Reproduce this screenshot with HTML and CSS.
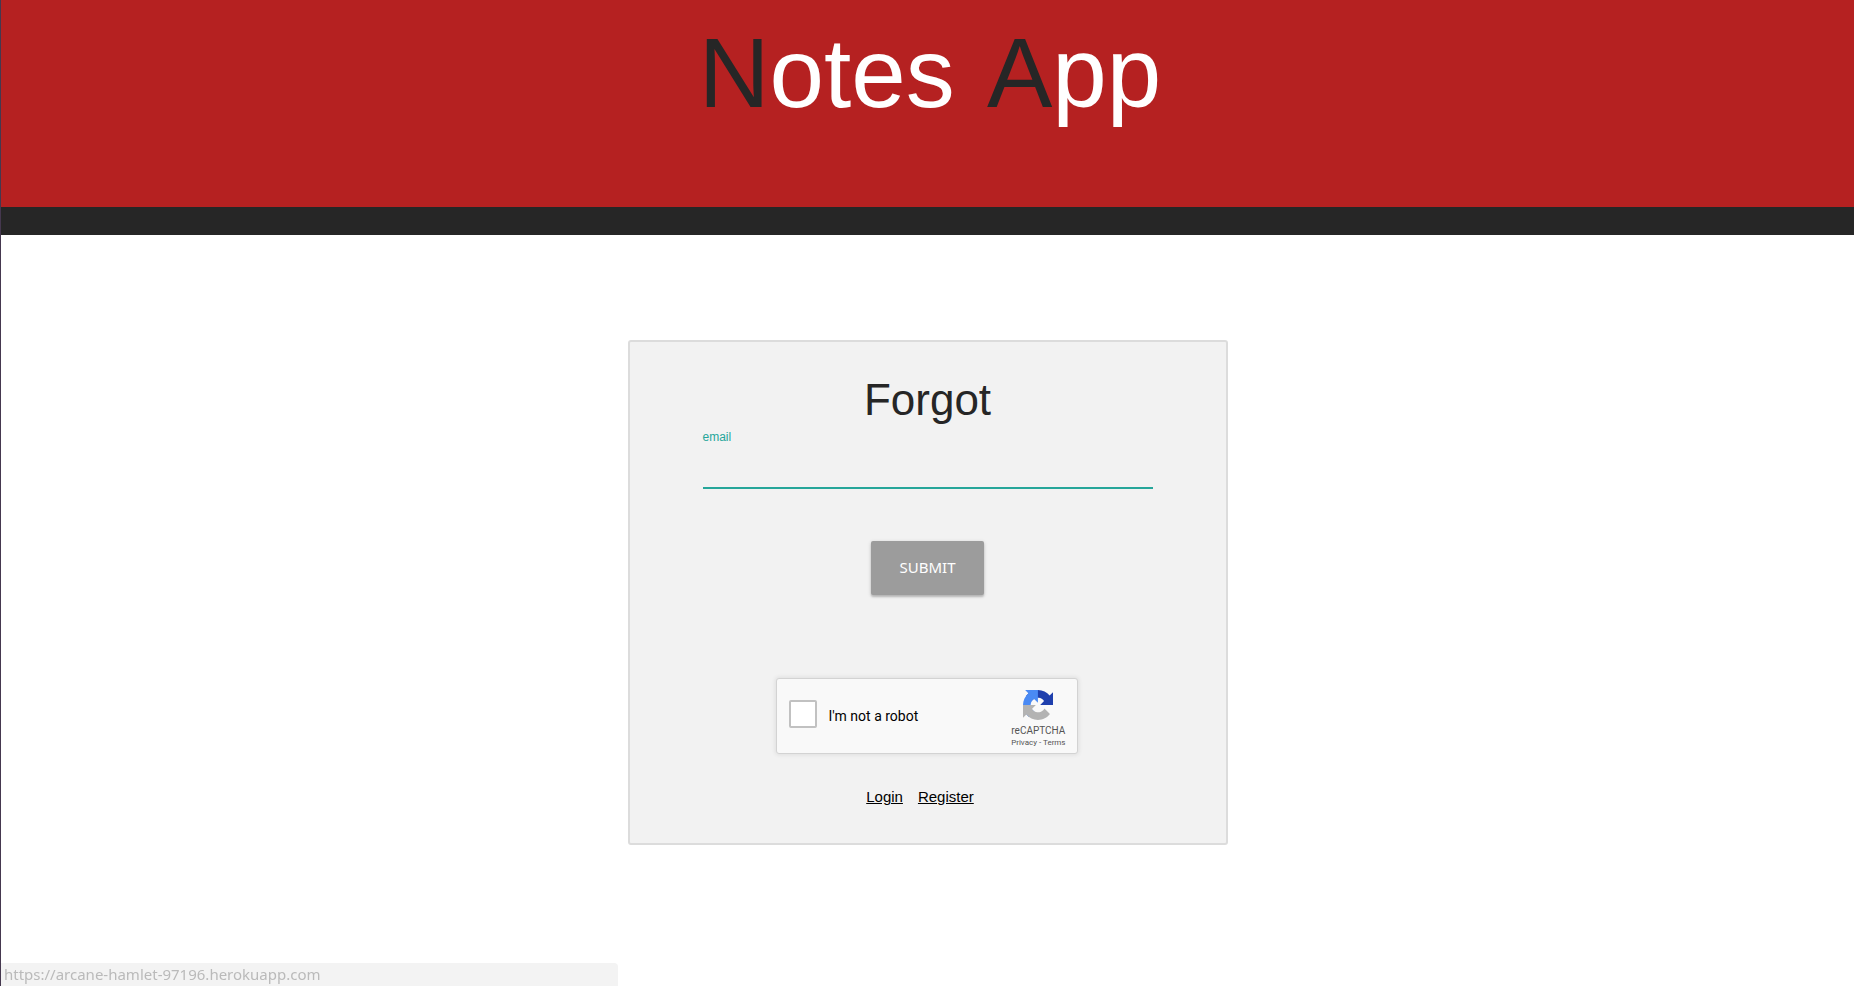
FILE: index.html
```html
<!DOCTYPE html>
<html lang="en">
<head>
<meta charset="utf-8">
<title>Notes App</title>
<link rel="stylesheet" href="styles.css">
</head>
<body>
<header class="banner">
  <h1 class="brand"><span class="word"><span class="initial">N</span>otes</span> <span class="word"><span class="initial">A</span>pp</span></h1>
</header>
<main class="content">
  <form class="card">
    <h2 class="card-title">Forgot</h2>
    <div class="field">
      <label class="field-label" for="email">email</label>
      <input class="field-input" id="email" type="email">
    </div>
    <button class="submit" type="submit">SUBMIT</button>
    <div class="captcha">
      <input class="captcha-box" id="robot" type="checkbox">
      <label class="captcha-label" for="robot">I'm not a robot</label>
      <div class="captcha-brand">
        <svg class="captcha-logo" viewBox="0 0 64 64" aria-hidden="true">
          <path fill="#1f3fad" d="M64 31.955l-.013-1.37V4.687l-7.16 7.16C50.968 4.674 42.033.093 32.029.093c-10.411 0-19.661 4.961-25.504 12.644l11.736 11.86a15.55 15.55 0 0 1 4.754-5.334c2.05-1.6 4.952-2.906 8.968-2.906.485 0 .86.057 1.135.163 4.976.393 9.288 3.14 11.828 7.124l-8.307 8.307z"/>
          <path fill="#4a8af4" d="M31.862.094l-1.37.013H4.594l7.16 7.16C4.581 13.126 0 22.062 0 32.066c0 10.411 4.961 19.661 12.644 25.504l11.86-11.736a15.55 15.55 0 0 1-5.334-4.754c-1.6-2.05-2.906-4.952-2.906-8.968 0-.485.057-.86.163-1.135.393-4.976 3.14-9.288 7.124-11.828l8.307 8.307z"/>
          <path fill="#b3b3b3" d="M.001 32.045l.013 1.37v25.898l7.16-7.16c5.859 7.173 14.794 11.754 24.798 11.754 10.411 0 19.661-4.961 25.504-12.644l-11.736-11.86a15.55 15.55 0 0 1-4.754 5.334c-2.05 1.6-4.952 2.906-8.968 2.906-.485 0-.86-.057-1.135-.163-4.976-.393-9.288-3.14-11.828-7.124l8.307-8.307z"/>
        </svg>
        <span class="captcha-name">reCAPTCHA</span>
        <span class="captcha-terms"><a href="#privacy">Privacy</a> - <a href="#terms">Terms</a></span>
      </div>
    </div>
    <nav class="links">
      <a href="#login">Login</a>
      <a href="#register">Register</a>
    </nav>
  </form>
</main>
<div class="status">https://arcane-hamlet-97196.herokuapp.com</div>
</body>
</html>
```

FILE: styles.css
```css
* { box-sizing: border-box; }

body {
  margin: 0;
  min-height: 100vh;
  border-left: 1px solid #45384f;
  background: #fff;
  color: #262626;
  font: 15px/22px "Liberation Sans", Arial, sans-serif;
}

.banner {
  min-height: 235px;
  padding-top: 18px;
  background: #b52121;
  border-bottom: 28px solid #262626;
}

.brand {
  margin: 0;
  color: #fff;
  font-size: 98px;
  font-weight: 400;
  line-height: 110px;
  text-align: center;
}

.word { margin-left: 5px; }

.initial { color: #262626; }

.content {
  display: flex;
  justify-content: center;
  padding: 105px 16px;
}

.card {
  display: flex;
  flex-direction: column;
  align-items: center;
  width: 100%;
  max-width: 600px;
  padding: 33px 16px 35px;
  background: #f2f2f2;
  border: 2px solid #dcdcdc;
  border-radius: 3px;
}

.card-title {
  margin: 0;
  font-size: 44px;
  font-weight: 400;
  line-height: 50px;
}

.field {
  display: flex;
  flex-direction: column;
  width: 80%;
  max-width: 450px;
}

.field-label {
  color: #26a69a;
  font-size: 12px;
  line-height: 24px;
}

.field-input {
  width: 100%;
  height: 40px;
  padding: 0;
  border: 0;
  border-bottom: 2px solid #26a69a;
  background: transparent;
  font: inherit;
  outline: none;
}

.submit {
  height: 54px;
  margin: 52px 0 83px;
  padding: 0 29px 2px;
  border: 0;
  border-radius: 2px;
  background: #9c9c9c;
  box-shadow: 0 2px 2px rgba(0, 0, 0, .18), 0 1px 4px rgba(0, 0, 0, .14);
  color: #fff;
  font: 15px/20px "Noto Sans", sans-serif;
}

.captcha {
  display: flex;
  align-items: center;
  width: 302px;
  height: 76px;
  margin-right: 2px;
  padding: 0 11px 0 12px;
  border: 1px solid #d3d3d3;
  border-radius: 3px;
  background: #f9f9f9;
  box-shadow: 0 0 4px 1px rgba(0, 0, 0, .08);
  font-family: Roboto, sans-serif;
}

.captcha-box {
  appearance: none;
  width: 28px;
  height: 28px;
  margin: 0 12px 4px 0;
  border: 2px solid #c1c1c1;
  border-radius: 2px;
  background: #fff;
}

.captcha-label {
  flex: 1;
  color: #000;
  font-size: 14px;
  line-height: 18px;
}

.captcha-brand {
  display: flex;
  flex-direction: column;
  align-items: center;
  padding-top: 5px;
  color: #555;
}

.captcha-logo {
  width: 30px;
  height: 30px;
  margin-bottom: 4px;
}

.captcha-name {
  font-size: 10px;
  line-height: 13px;
}

.captcha-terms {
  font-size: 8px;
  line-height: 11px;
}

.captcha-terms a {
  color: inherit;
  text-decoration: none;
}

.links {
  display: flex;
  margin-top: 32px;
}

.links a {
  margin-right: 15px;
  color: #000;
}

.status {
  position: fixed;
  bottom: 0;
  left: 1px;
  width: 33.3%;
  padding-left: 3px;
  border-top-right-radius: 4px;
  background: #f3f3f3;
  color: #bababa;
  font: 15px/23px "Noto Sans", sans-serif;
}
```
